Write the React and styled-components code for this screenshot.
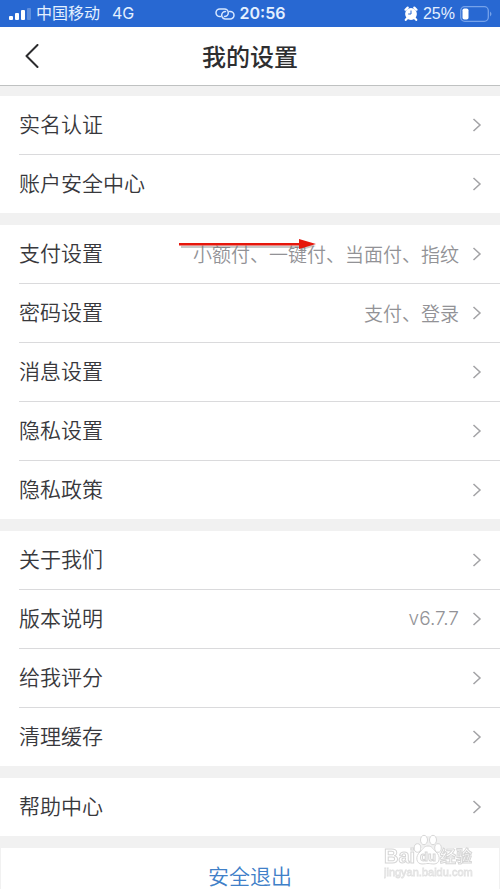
import React from "react";
import styled, { createGlobalStyle } from "styled-components";

const GlobalStyle = createGlobalStyle`
  * {
    box-sizing: border-box;
  }

  body {
    margin: 0;
    background: #f1f1f1;
    font-family: "Noto Sans CJK SC", sans-serif;
    color: #38383c;
  }
`;

const Screen = styled.div`
  position: relative;
  height: 100vh;
  overflow-y: auto;
  scrollbar-width: none;
`;

const StatusBar = styled.div`
  display: grid;
  grid-template-columns: 1fr auto 1fr;
  align-items: center;
  height: 27px;
  padding: 0 8px;
  background: #2868d2;
  color: #e4f0ff;
  font-family: Inter, "Noto Sans CJK SC", sans-serif;
  font-size: 16px;
  line-height: 27px;
`;

const StatusGroup = styled.div`
  display: flex;
  align-items: center;
  justify-content: ${(props) => props.$align || "flex-start"};
  gap: ${(props) => props.$gap || 5}px;
  white-space: nowrap;
`;

const Network = styled.span`
  margin-left: 7px;
`;

const Time = styled.time`
  font-weight: 600;
`;

const Percent = styled.span`
  font-family: "Liberation Sans", Arial, sans-serif;
`;

const Header = styled.header`
  display: grid;
  grid-template-columns: 64px 1fr 64px;
  align-items: center;
  height: 59px;
  border-bottom: 1px solid #bfc1c1;
  background: #fff;
`;

const BackButton = styled.button`
  display: flex;
  align-items: center;
  justify-content: center;
  height: 58px;
  padding: 0;
  border: 0;
  background: none;
  color: #2c2c2e;
`;

const Title = styled.h1`
  margin: 0;
  font-size: 24px;
  font-weight: 500;
  line-height: 56px;
  text-align: center;
  color: #2e2e30;
`;

const Content = styled.main`
  display: flex;
  flex-direction: column;
  gap: 12px;
  padding-top: 10px;
`;

const Group = styled.ul`
  margin: 0;
  padding: 0 0 0 19px;
  list-style: none;
  background: #fff;
`;

const Item = styled.li`
  position: relative;

  & + & {
    border-top: 1px solid #dadadc;
  }
`;

const RowLink = styled.a`
  display: flex;
  align-items: center;
  height: 58px;
  padding-right: 18px;
  color: inherit;
  text-decoration: none;
`;

const Label = styled.span`
  flex: 1;
  padding-bottom: 4px;
  font-size: 21px;
  font-weight: 350;
  line-height: 32px;
`;

const Value = styled.span`
  margin-right: 13px;
  font-family: ${(props) =>
    props.$latin ? "Inter, sans-serif" : '"Noto Sans CJK SC", sans-serif'};
  font-size: 19px;
  font-weight: 350;
  line-height: 28px;
  color: #929296;
`;

const Arrow = styled.svg`
  position: absolute;
  top: 12px;
  left: 160px;
`;

const LogoutButton = styled.button`
  height: 58px;
  margin: 0 1px;
  padding: 0 0 4px;
  border: 0;
  background: #fff;
  color: #4080c8;
  font-family: inherit;
  font-size: 21px;
  font-weight: 350;
  line-height: 32px;
`;

const Watermark = styled.div`
  position: fixed;
  right: 24px;
  bottom: 9px;
  pointer-events: none;

  svg {
    display: block;
  }
`;

const SignalIcon = () => (
  <svg width="23" height="13" viewBox="0 0 23 13" fill="#fff">
    <rect x="1" y="9" width="4" height="4" rx="1" />
    <rect x="7" y="6" width="4" height="7" rx="1" />
    <rect x="13" y="3" width="4" height="10" rx="1" />
    <rect x="19" y="1" width="4" height="12" rx="1" opacity="0.25" />
  </svg>
);

const HotspotIcon = () => (
  <svg
    width="20"
    height="12"
    viewBox="0 0 20 12"
    fill="none"
    stroke="#d5e6ff"
    strokeWidth="1.5"
    strokeLinecap="round"
  >
    <path d="M5.500 8.600H4.800a3.800 3.800 0 0 1 0-7.600h4.700a3.800 3.800 0 0 1 0 7.600" />
    <path d="M14.500 3.400h.7a3.800 3.800 0 0 1 0 7.600h-4.700a3.800 3.800 0 0 1 0-7.600" />
  </svg>
);

const AlarmIcon = () => (
  <svg width="14" height="15" viewBox="0 0 14 15">
    <path
      d="M1.500 3.700 3.700 1.600M12.500 3.700l-2.200-2.100M3.200 12.200l-1.400 1.600M10.800 12.200l1.400 1.600"
      stroke="#fff"
      strokeWidth="2.200"
      strokeLinecap="round"
    />
    <circle cx="7" cy="8" r="5.900" fill="#fff" />
    <path d="M7 4.500V8H4.200" fill="none" stroke="#2868d2" strokeWidth="1" />
  </svg>
);

const BatteryIcon = () => (
  <svg width="32" height="16" viewBox="0 0 32 16">
    <rect
      x="0.700"
      y="0.700"
      width="27.600"
      height="14.600"
      rx="4"
      fill="none"
      stroke="#76a2ea"
      strokeWidth="1.300"
    />
    <rect x="2.500" y="2.500" width="6" height="11" rx="1.800" fill="#fff" />
    <path d="M30 5.500q3 2.500 0 5z" fill="#76a2ea" />
  </svg>
);

const BackIcon = () => (
  <svg width="14" height="24" viewBox="0 0 14 24" fill="none">
    <path
      d="M12.500 1 1.500 12l11 11"
      stroke="currentColor"
      strokeWidth="2"
      strokeLinecap="round"
      strokeLinejoin="round"
    />
  </svg>
);

const ChevronIcon = () => (
  <svg width="10" height="14" viewBox="0 0 10 14" fill="none">
    <path d="m1.500 1 6.500 6-6.500 6" stroke="#a3a3a6" strokeWidth="1.500" />
  </svg>
);

const PointerArrow = () => (
  <Arrow width="140" height="16" viewBox="0 0 140 16">
    <path d="M2 8.800h119v-3.400l16 3.600-16 4.600V11H2z" fill="#777" opacity="0.4" />
    <path d="M0 6h120V2l17 5-17 5V8.500H0z" fill="#e6170c" />
  </Arrow>
);

const BaiduMark = () => (
  <Watermark aria-hidden="true">
    <svg width="92" height="46" viewBox="0 0 92 46">
      <g
        fill="#fff"
        stroke="#d6d6d6"
        strokeWidth="1"
        fontFamily="Liberation Sans, Arial, sans-serif"
        fontWeight="700"
      >
        <text x="0" y="29" fontSize="20">
          Bai
        </text>
        <ellipse cx="33.500" cy="14" rx="3.300" ry="4.300" />
        <ellipse cx="40" cy="6" rx="3.500" ry="4.700" />
        <ellipse cx="49" cy="6" rx="3.500" ry="4.700" />
        <ellipse cx="54" cy="14" rx="3.300" ry="4.300" />
        <path d="M44 12c-4 0-5 3-8 6-5 4-4 12 2 12 3 0 4-.5 6-.5s3 .5 6 .5c6 0 7-8 2-12-3-3-4-6-8-6z" />
        <text x="36" y="27" fontSize="13">
          du
        </text>
        <text x="56" y="28" fontSize="16" fontFamily="Noto Sans CJK SC, sans-serif">
          经验
        </text>
      </g>
      <text
        x="0"
        y="42"
        fontSize="11"
        fontFamily="Liberation Sans, Arial, sans-serif"
        fill="#fff"
        stroke="#e2e2e2"
        strokeWidth="0.800"
      >
        jingyan.baidu.com
      </text>
    </svg>
  </Watermark>
);

const groups = [
  [{ label: "实名认证" }, { label: "账户安全中心" }],
  [
    { label: "支付设置", value: "小额付、一键付、当面付、指纹", marked: true },
    { label: "密码设置", value: "支付、登录" },
    { label: "消息设置" },
    { label: "隐私设置" },
    { label: "隐私政策" },
  ],
  [
    { label: "关于我们" },
    { label: "版本说明", value: "v6.7.7", latin: true },
    { label: "给我评分" },
    { label: "清理缓存" },
  ],
  [{ label: "帮助中心" }],
];

const SettingRow = ({ label, value, latin, marked }) => (
  <Item>
    <RowLink href="#">
      <Label>{label}</Label>
      {value && <Value $latin={latin}>{value}</Value>}
      <ChevronIcon />
    </RowLink>
    {marked && <PointerArrow />}
  </Item>
);

const App = () => {
  return (
    <Screen>
      <GlobalStyle />
      <StatusBar>
        <StatusGroup>
          <SignalIcon />
          <span>中国移动</span>
          <Network>4G</Network>
        </StatusGroup>
        <StatusGroup>
          <HotspotIcon />
          <Time>20:56</Time>
        </StatusGroup>
        <StatusGroup $align="flex-end" $gap={5}>
          <AlarmIcon />
          <Percent>25%</Percent>
          <BatteryIcon />
        </StatusGroup>
      </StatusBar>
      <Header>
        <BackButton aria-label="返回">
          <BackIcon />
        </BackButton>
        <Title>我的设置</Title>
      </Header>
      <Content>
        {groups.map((rows) => (
          <Group key={rows[0].label}>
            {rows.map((row) => (
              <SettingRow key={row.label} {...row} />
            ))}
          </Group>
        ))}
        <LogoutButton>安全退出</LogoutButton>
      </Content>
      <BaiduMark />
    </Screen>
  );
};

export default App;
